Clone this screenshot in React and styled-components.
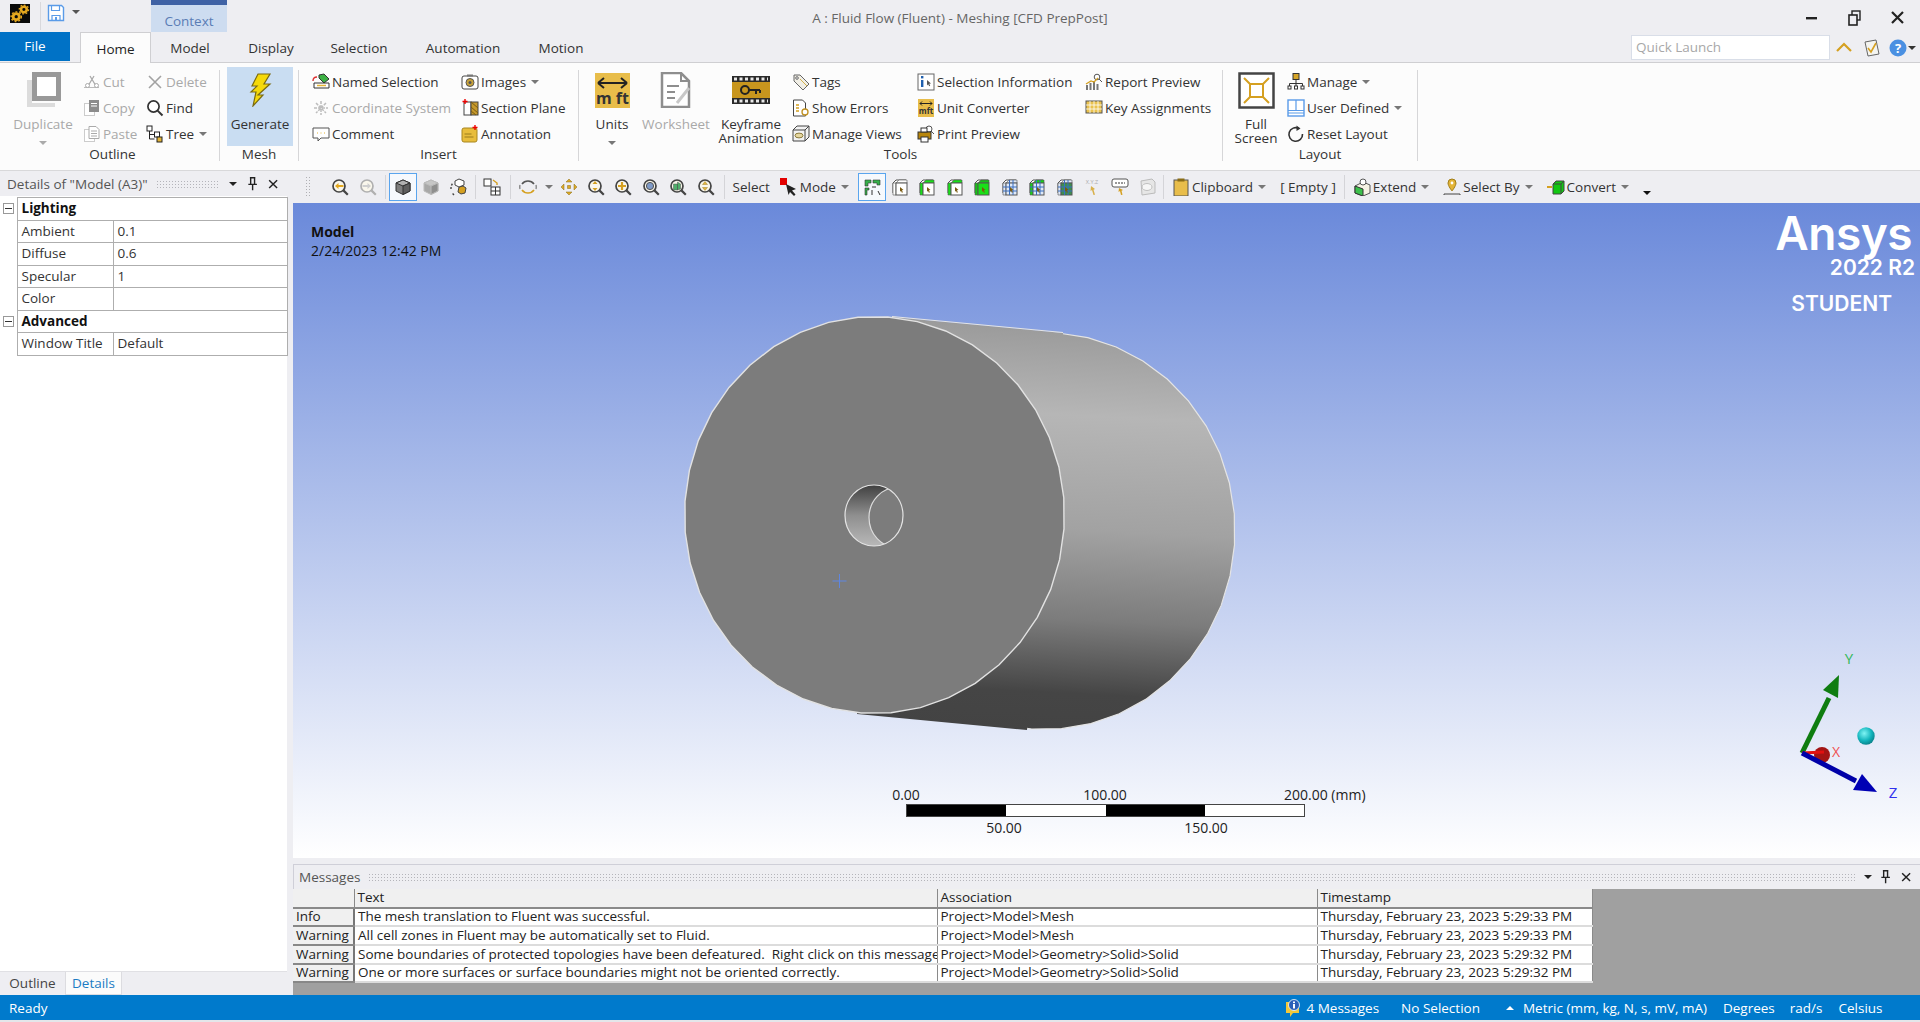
import React from "react";
import styled, { createGlobalStyle } from "styled-components";

const GlobalStyle = createGlobalStyle`
    html, body {
        margin: 0;
        height: 100%;
        overflow: hidden;
        background: #eeeef2;
    }
    * { box-sizing: border-box; }
    body {
        font-family: "Open Sans", "Noto Sans", "Liberation Sans", sans-serif;
        font-size: 13.5px;
        color: #222;
    }
`;

const Window = styled.div`
    width: 1920px;
    height: 1022px;
    display: flex;
    flex-direction: column;
    background: #eeeef2;
`;

/* title bar */
const TitleBar = styled.div`
    height: 32px;
    display: flex;
    flex: none;
`;
const TitleLeft = styled.div`
    width: 240px;
    display: flex;
    align-items: flex-start;
    padding: 4px 0 0 10px;
`;
const TitleDivider = styled.div`
    width: 1px;
    height: 28px;
    background: #d8d8dc;
    margin: -2px 6px 0 10px;
`;
const ContextTab = styled.div`
    width: 76px;
    height: 32px;
    margin: -4px 0 0 71px;
    background: #cddcf0;
    border-top: 5px solid #3f62a5;
    color: #5a7db5;
    text-align: center;
    line-height: 33px;
`;
const TitleText = styled.div`
    flex: 1;
    text-align: center;
    color: #666;
    line-height: 36px;
`;
const WinControls = styled.div`
    width: 240px;
    display: flex;
    justify-content: flex-end;
    align-items: center;
    gap: 25px;
    padding: 4px 13px 0 0;
`;

/* tabs */
const TabRow = styled.div`
    height: 30px;
    display: flex;
    flex: none;
    align-items: flex-start;
    position: relative;
    z-index: 1;
`;
const FileTab = styled.div`
    width: 70px;
    height: 29px;
    margin-right: 10px;
    background: #0072c6;
    color: #fff;
    text-align: center;
    line-height: 29px;
`;
const Tab = styled.div`
    width: ${(p) => p.$w}px;
    height: 31px;
    text-align: center;
    line-height: 33px;
    color: #333;
    ${(p) =>
        p.$active &&
        `
        background: #fcfcfc;
        border: 1px solid #cfcfd2;
        border-bottom: none;
        color: #222;
    `}
`;
const QuickArea = styled.div`
    margin-left: auto;
    display: flex;
    align-items: center;
    height: 29px;
    padding-top: 2px;
`;
const QuickLaunch = styled.div`
    width: 199px;
    height: 25px;
    background: #fff;
    border: 1px solid #d9dee8;
    color: #a8a8a8;
    padding-left: 4px;
    line-height: 23px;
    margin-right: 5px;
`;

/* ribbon */
const Ribbon = styled.div`
    height: 109px;
    flex: none;
    display: flex;
    align-items: flex-start;
    background: #fcfcfc;
    border-top: 1px solid #cfcfd2;
    border-bottom: 1px solid #d8d8da;
    padding-top: 4px;
`;
const Group = styled.div`
    width: ${(p) => p.$w}px;
    flex: none;
`;
const GroupBody = styled.div`
    height: 80px;
    display: flex;
    padding-left: ${(p) => p.$pl || 0}px;
`;
const GroupLabel = styled.div`
    height: 15px;
    line-height: 14px;
    text-align: center;
    color: #333;
    padding-left: ${(p) => p.$pl || 0}px;
`;
const GroupSep = styled.div`
    width: 1px;
    height: 91px;
    margin-top: 3px;
    flex: none;
    background: #d6d6d8;
`;
const LargeBtn = styled.div`
    width: ${(p) => p.$w}px;
    margin: 0 ${(p) => p.$mr || 0}px 0 ${(p) => p.$ml || 0}px;
    height: 79px;
    flex: none;
    display: flex;
    flex-direction: column;
    align-items: center;
    padding-top: 5px;
    line-height: 14px;
    text-align: center;
    color: ${(p) => (p.$off ? "#a9a9a9" : "#333")};
    background: ${(p) => (p.$on ? "#c9ddf2" : "transparent")};
`;
const LargeIcon = styled.div`
    height: 36px;
    display: flex;
    align-items: center;
    margin-bottom: 9px;
`;
const SmallCol = styled.div`
    width: ${(p) => p.$w}px;
    flex: none;
    padding-top: 2px;
`;
const SmallRow = styled.div`
    height: 26px;
    display: flex;
    align-items: center;
    gap: 2px;
    white-space: nowrap;
    color: ${(p) => (p.$off ? "#a9a9a9" : "#333")};
`;
const Caret = styled.span`
    display: inline-block;
    width: 0;
    height: 0;
    margin: ${(p) => p.$m || "0 0 0 3px"};
    border-left: 4px solid transparent;
    border-right: 4px solid transparent;
    border-top: 4px solid ${(p) => p.$c || "#777"};
`;

/* main area */
const Main = styled.div`
    flex: 1;
    min-height: 0;
    display: flex;
`;
const LeftPanel = styled.div`
    width: 287px;
    margin: 1px 6px 0 0;
    display: flex;
    flex-direction: column;
    background: #fff;
`;
const PaneHeader = styled.div`
    height: ${(p) => p.$h}px;
    flex: none;
    display: flex;
    align-items: center;
    gap: 8px;
    padding: 0 8px 0 ${(p) => p.$pl}px;
    background: #eeeef2;
    color: #555;
    white-space: nowrap;
    ${(p) => p.$framed && "border-top: 1px solid #cfcfd8; border-left: 1px solid #cfcfd8;"}
`;
const Grip = styled.div`
    flex: 1;
    height: 8px;
    background-image: radial-gradient(#b4b4ba 0.7px, transparent 0.8px);
    background-size: 3px 3px;
`;
const PaneBtn = styled.span`
    display: flex;
    align-items: center;
    justify-content: center;
    width: 12px;
`;
const DetailsTable = styled.table`
    width: 287px;
    margin-top: 1px;
    table-layout: fixed;
    border-collapse: collapse;
    font-size: 13.5px;
    td {
        height: 22.5px;
        padding: 0 4px;
        line-height: 1;
        color: #333;
        border: 1px solid #aeaeae;
        white-space: nowrap;
        overflow: hidden;
    }
    td.gutter {
        border: none;
        padding: 0 0 0 3px;
    }
    td.group {
        font-weight: 700;
        color: #111;
    }
`;
const MinusBox = styled.div`
    width: 11px;
    height: 11px;
    border: 1px solid #999;
    display: flex;
    align-items: center;
    justify-content: center;
    &::before {
        content: "";
        width: 7px;
        height: 1px;
        background: #333;
    }
`;
const PanelFill = styled.div`
    flex: 1;
`;
const BottomTabs = styled.div`
    height: 24px;
    flex: none;
    display: flex;
    background: #eeeef2;
    border-top: 1px solid #e0e0e4;
`;
const BottomTab = styled.div`
    width: ${(p) => p.$w}px;
    text-align: center;
    line-height: 22px;
    color: ${(p) => (p.$active ? "#1c7cc4" : "#444")};
    background: ${(p) => (p.$active ? "#fbfbfb" : "transparent")};
    ${(p) => p.$active && "border: 1px solid #dcdce0; border-top: none;"}
`;
const RightPane = styled.div`
    flex: 1;
    min-width: 0;
    display: flex;
    flex-direction: column;
`;

/* graphics toolbar */
const Toolbar = styled.div`
    height: 32px;
    flex: none;
    display: flex;
    align-items: center;
    padding-left: 12px;
    color: #333;
    white-space: nowrap;
`;
const ToolGrip = styled.div`
    width: 6px;
    height: 22px;
    margin-right: 15px;
    background-image: radial-gradient(#b0b0b4 0.7px, transparent 0.8px);
    background-size: 3px 3px;
`;
const ToolBtn = styled.div`
    width: ${(p) => p.$w || 28}px;
    height: 28px;
    flex: none;
    display: flex;
    align-items: center;
    justify-content: center;
    ${(p) => p.$on && "border: 1px solid #5aa5ee; background: #f6f9fd;"}
`;
const ToolSep = styled.div`
    width: 1px;
    height: 24px;
    flex: none;
    background: #d4d4d8;
    margin: 0 ${(p) => p.$r ?? 3}px 0 ${(p) => p.$l ?? 3}px;
`;
const ToolText = styled.div`
    display: flex;
    align-items: center;
    gap: 2px;
    margin: 0 ${(p) => p.$r || 0}px 0 ${(p) => p.$l || 0}px;
`;

/* viewport */
const Viewport = styled.div`
    height: 655px;
    flex: none;
    position: relative;
    overflow: hidden;
    background: linear-gradient(#6a89da, #ffffff);
`;
const SceneSvg = styled.svg`
    position: absolute;
    left: 0;
    top: 0;
`;
const ModelInfo = styled.div`
    position: absolute;
    left: 18px;
    top: 19px;
    color: #111;
    font-size: 14px;
    line-height: 19px;
    b {
        display: block;
    }
`;
const Brand = styled.div`
    position: absolute;
    right: 0;
    top: 0;
    width: 180px;
    color: #fff;
    font-family: Inter, "Open Sans", sans-serif;
    font-weight: 600;
    text-align: right;
    white-space: nowrap;
`;
const BrandName = styled.div`
    font-size: 46px;
    line-height: 46px;
    margin: 7px 8px 0 0;
    letter-spacing: -0.5px;
`;
const BrandYear = styled.div`
    font-size: 21px;
    line-height: 24px;
    margin: 0 5px 0 0;
`;
const BrandEdition = styled.div`
    font-size: 21px;
    line-height: 24px;
    margin: 12px 28px 0 0;
`;
const ScaleBar = styled.div`
    position: absolute;
    left: 613px;
    top: 583px;
    width: 399px;
    height: 60px;
    font-size: 14px;
    color: #222;
`;
const ScaleTrack = styled.div`
    position: absolute;
    left: 0;
    right: 0;
    top: 18px;
    height: 13px;
    display: flex;
    border: 1px solid #444;
`;
const ScaleSeg = styled.div`
    flex: 1;
    background: ${(p) => (p.$dark ? "#000" : "#fff")};
`;
const ScaleLabel = styled.span`
    position: absolute;
    top: ${(p) => (p.$low ? 33 : 0)}px;
    left: ${(p) => p.$x}px;
    line-height: 18px;
    transform: translateX(${(p) => (p.$start ? "0" : "-50%")});
    white-space: nowrap;
`;

/* messages */
const Messages = styled.div`
    flex: 1;
    min-height: 0;
    margin-top: 6px;
    display: flex;
    flex-direction: column;
    background: #a0a0a0;
`;
const MessageTable = styled.table`
    width: 1299px;
    table-layout: fixed;
    border-collapse: collapse;
    font-size: 13.5px;
    th, td {
        height: 18.7px;
        padding: 0 3px;
        line-height: 1;
        text-align: left;
        font-weight: 400;
        color: #222;
        white-space: pre;
        overflow: hidden;
        background: #fff;
        border-right: 1px solid #8a8a8a;
        border-bottom: 2px solid #dcdcdc;
    }
    th, td.kind {
        background: #f0f0f0;
    }
    th {
        border-bottom: 2px solid #8a8a8a;
    }
    td.kind {
        border-right: 2px solid #777;
        border-bottom-color: #888;
    }
`;

/* status bar */
const StatusBar = styled.div`
    height: 25px;
    flex: none;
    display: flex;
    align-items: center;
    padding: 0 10px 0 9px;
    background: #007acc;
    color: #fff;
`;
const StatusItem = styled.div`
    display: flex;
    align-items: center;
    gap: 3px;
    margin-left: ${(p) => p.$ml}px;
    white-space: nowrap;
`;
const BottomStrip = styled.div`
    height: 2px;
    flex: none;
    background: #e4e6ea;
`;

/* --- icons --- */
const mag = (inner, c = "#444") => (
    <>
        <circle cx="8" cy="8" r="6" fill="#faf7ec" stroke={c} strokeWidth="1.7" />
        <path d="M12.4 12.4L16.8 16.8" stroke={c} strokeWidth="2.2" />
        {inner}
    </>
);
const cube = (top, left, right, stroke = "#444") => (
    <>
        <path d="M9 2l7 3v8l-7 3.5L2 13V5z" fill={left} stroke={stroke} />
        <path d="M9 2l7 3-7 3-7-3z" fill={top} stroke={stroke} />
        <path d="M9 8l7-3v8l-7 3.5z" fill={right} stroke={stroke} />
    </>
);
const pick = (top, front, mesh) => (
    <>
        <path d="M2 5l3-3h10v13H5l-3-0z" fill="#fff" stroke="#555" />
        <path d="M2 5h3v12H2zM5 5l3-3h8v3z" fill={top} stroke="#555" strokeWidth=".6" />
        <rect x="5" y="5" width="11" height="12" fill={front} stroke="#555" />
        {mesh && <path d="M8.5 2v15M12 2v15M2 9h14M2 13h14" stroke="#3a6fc0" strokeWidth="1" />}
        <path d="M9 9l3.5 3-1.6.3 1 2-1 .4-.9-2-1 1z" fill="#7a5a10" />
    </>
);

const ICONS = {
    gears: (
        <>
            <rect width="18" height="18" fill="#0a0a0a" />
            <circle cx="12.5" cy="5.2" r="2.6" fill="none" stroke="#e5a81f" strokeWidth="2.4" />
            <circle cx="5.6" cy="12" r="2.8" fill="none" stroke="#e5a81f" strokeWidth="2.6" />
            <circle cx="12.5" cy="5.2" r="4.2" fill="none" stroke="#e5a81f" strokeWidth="1.2" strokeDasharray="1.6 1.6" />
            <circle cx="5.6" cy="12" r="4.6" fill="none" stroke="#e5a81f" strokeWidth="1.3" strokeDasharray="1.7 1.7" />
        </>
    ),
    save: (
        <>
            <path d="M1.5 1.5h13l2 2v13h-15z" fill="#fff" stroke="#5a9be8" strokeWidth="1.4" />
            <path d="M4.5 1.5v5h8v-5M5 16.5v-5h8v5" fill="none" stroke="#5a9be8" strokeWidth="1.2" />
            <rect x="8" y="13" width="2" height="3" fill="#5a9be8" />
        </>
    ),
    cut: (
        <>
            <path d="M1 14.5h15" stroke="#bbb" />
            <path d="M5 13L11 3M13 13L7 3" stroke="#aaa" strokeWidth="1.3" />
            <circle cx="4.5" cy="12.5" r="2" fill="#fff" stroke="#aaa" />
            <circle cx="13.5" cy="12.5" r="2" fill="#fff" stroke="#aaa" />
        </>
    ),
    copy: (
        <>
            <rect x="1.5" y="4.5" width="10" height="12" fill="#fff" stroke="#ccc" />
            <rect x="6" y="1" width="10" height="12" fill="#8c8c8c" />
            <path d="M8 4.5h6M8 7h6" stroke="#fff" />
        </>
    ),
    paste: (
        <>
            <rect x="1.5" y="4.5" width="10" height="12" fill="#fff" stroke="#ccc" />
            <path d="M6 1.5h7l3 3v9H6z" fill="#fff" stroke="#aaa" />
            <path d="M8 6h6M8 8.5h6M8 11h6" stroke="#aaa" />
        </>
    ),
    del: <path d="M3 3l12 12M15 3L3 15" stroke="#a2a2a2" strokeWidth="1.6" />,
    find: (
        <>
            <circle cx="7.5" cy="7.5" r="5.6" fill="#fff" stroke="#333" strokeWidth="1.7" />
            <path d="M11.6 11.6L16.5 16.5" stroke="#333" strokeWidth="2" />
        </>
    ),
    tree: (
        <>
            <rect x="1" y="1" width="5" height="5" fill="#fff" stroke="#222" />
            <path d="M3.5 6v8h5M3.5 9.5h5" fill="none" stroke="#222" />
            <rect x="8.5" y="7" width="5" height="5" fill="#fff" stroke="#222" />
            <rect x="11" y="12" width="5" height="5" fill="#e3b437" stroke="#222" />
        </>
    ),
    named: (
        <>
            <path d="M2 10h15v5H2z" fill="#fff" stroke="#333" />
            <path d="M7 2l5-1 5 5-5 4-5-5z" fill="#3cb043" stroke="#333" />
            <path d="M1 8c0-3 2-4 4-4" fill="none" stroke="#d33" strokeWidth="1.4" />
            <path d="M5 12.5h9" stroke="#e3b437" strokeWidth="1.5" />
        </>
    ),
    coord: <path d="M9 2v14M2 9h14M4 4l10 10M14 4L4 14" stroke="#bdbdbd" strokeWidth="1.5" strokeDasharray="3 1" />,
    comment: (
        <>
            <path d="M1 3h16v10H9l-3 3v-3H1z" fill="#fff" stroke="#555" />
            <path d="M5 8h1M8.5 8h1M12 8h1" stroke="#e3b437" />
        </>
    ),
    images: (
        <>
            <rect x="1" y="3" width="16" height="13" rx="2" fill="#fff" stroke="#444" />
            <rect x="6" y="1.5" width="6" height="2" fill="#777" />
            <circle cx="9" cy="9.5" r="4" fill="#c9a33a" stroke="#555" />
            <circle cx="9" cy="9.5" r="1.5" fill="#555" />
        </>
    ),
    section: (
        <>
            <rect x="3" y="3" width="7" height="13" fill="#fff" stroke="#444" />
            <rect x="10" y="3" width="7" height="13" fill="#c79a2c" stroke="#444" />
            <path d="M10 3l7 6M10 8l7 6M10 12l5 4" stroke="#7a5c12" />
            <path d="M4 0v5M1.5 2.5h5" stroke="#e00" strokeWidth="1.4" />
        </>
    ),
    annot: (
        <>
            <rect x="1" y="3" width="15" height="14" rx="2" fill="#e8bd3c" stroke="#a8861f" />
            <path d="M3.5 12h9M3.5 9h7" stroke="#9a7c1c" />
            <path d="M14 0v5M11.5 2.5h5" stroke="#e00" strokeWidth="1.4" />
        </>
    ),
    tags: (
        <>
            <path d="M2 2h6l9 9-6 6-9-9z" fill="#f1efe6" stroke="#666" />
            <circle cx="5" cy="5" r="1.3" fill="#fff" stroke="#666" />
            <path d="M8 6l7 7" stroke="#d4b04a" />
        </>
    ),
    errors: (
        <>
            <path d="M1.5 1h9l3 3v13h-12z" fill="#fff" stroke="#444" />
            <path d="M4 6h3M4 9h3M4 12h3" stroke="#d4a020" strokeWidth="1.4" />
            <circle cx="13" cy="13" r="3" fill="#fff" stroke="#c09020" strokeWidth="1.3" />
        </>
    ),
    views: (
        <>
            <path d="M1 5l4-4h12v11l-4 4H1z" fill="#f2f2f2" stroke="#444" />
            <path d="M1 5h12v11M13 5l4-4" fill="none" stroke="#444" />
            <ellipse cx="7" cy="10.5" rx="4" ry="2.4" fill="#e6d7a0" stroke="#8a7a3c" />
        </>
    ),
    selinfo: (
        <>
            <rect x="1" y="1" width="16" height="16" fill="#fff" stroke="#666" />
            <rect x="4" y="3" width="2.4" height="2.4" fill="#1e5fae" />
            <rect x="4" y="7" width="2.4" height="7" fill="#1e5fae" />
            <path d="M10 7l4 3.5-1.8.3 1 2-1 .5-1-2-1.2 1.2z" fill="#555" />
        </>
    ),
    unitconv: (
        <>
            <rect x="1" y="0" width="16" height="18" fill="#e8bd4a" />
            <path d="M3 4.5h12M3 4.5l2-2M3 4.5l2 2M15 4.5l-2-2M15 4.5l-2 2" stroke="#222" fill="none" />
            <text x="9" y="15" textAnchor="middle" fontSize="8" fontWeight="700" fontFamily="Open Sans" fill="#333">mft</text>
        </>
    ),
    print: (
        <>
            <circle cx="12" cy="4" r="3" fill="#fff" stroke="#555" />
            <path d="M14 6l3 3" stroke="#555" />
            <rect x="1" y="7" width="13" height="7" fill="#b8860b" stroke="#333" />
            <rect x="4" y="3" width="6" height="4" fill="#fff" stroke="#333" />
            <rect x="4" y="12" width="7" height="5" fill="#fff" stroke="#333" />
        </>
    ),
    report: (
        <>
            <circle cx="12" cy="4" r="2.8" fill="#fff" stroke="#555" />
            <path d="M14 6l3 3" stroke="#555" />
            <path d="M2 17v-5M5.5 17v-7M9 17v-9M12.5 17v-6" stroke="#777" strokeWidth="2" />
            <path d="M1 11l5-3 3 1 4-4" fill="none" stroke="#d4a020" strokeWidth="1.3" />
        </>
    ),
    keys: (
        <>
            <rect x="1" y="2" width="16" height="12" fill="#eac24e" stroke="#555" />
            <path d="M1 6h16M1 10h16M5 2v12M9 2v12M13 2v12" stroke="#fff" strokeWidth=".8" />
        </>
    ),
    manage: (
        <>
            <rect x="6" y="0.5" width="6" height="6" fill="#d6a528" stroke="#333" />
            <path d="M9 6.5v4M2.5 13v-2.5h13V13M9 10.5V13" fill="none" stroke="#333" />
            <rect x="1" y="13" width="3" height="3" fill="#fff" stroke="#333" />
            <rect x="7.5" y="13" width="3" height="3" fill="#fff" stroke="#333" />
            <rect x="14" y="13" width="3" height="3" fill="#fff" stroke="#333" />
        </>
    ),
    userdef: (
        <>
            <rect x="1" y="1" width="16" height="16" fill="#fff" stroke="#5a9be8" strokeWidth="1.4" />
            <path d="M1 11.5h16M1 14h16M9 1v10.5" stroke="#5a9be8" strokeWidth="1.2" />
        </>
    ),
    reset: (
        <>
            <path d="M12 3.5A6.8 6.8 0 1 0 15.5 9" fill="none" stroke="#333" strokeWidth="1.6" />
            <path d="M9.5 0.5l4 3-4 2.5z" fill="#333" />
        </>
    ),
    minimize: <rect x="3" y="8" width="11" height="2.4" fill="#222" />,
    restore: (
        <>
            <rect x="6" y="2" width="8" height="9" fill="none" stroke="#222" strokeWidth="1.4" />
            <rect x="3" y="6" width="8" height="10" fill="#eeeef2" stroke="#222" strokeWidth="1.6" />
        </>
    ),
    close: <path d="M3 3l11 11M14 3L3 14" stroke="#222" strokeWidth="2.2" />,
    chevron: <path d="M2 12l7-7 7 7" fill="none" stroke="#d5a021" strokeWidth="2.2" />,
    feedback: (
        <>
            <path d="M3 3l11-2 3 14-11 2z" fill="#f4f4f0" stroke="#666" />
            <path d="M6 9l3 4 5-9" fill="none" stroke="#d5a021" strokeWidth="1.6" />
        </>
    ),
    help: (
        <>
            <circle cx="9" cy="9" r="8.5" fill="#4a90e2" />
            <text x="9" y="14" textAnchor="middle" fontSize="13" fontWeight="700" fontFamily="Open Sans" fill="#fff">?</text>
        </>
    ),
    zoomPrev: mag(<path d="M4 8l3.5-3v2h5v2h-5v2z" fill="#e3a81f" />),
    zoomNext: mag(<path d="M12 8L8.500 5v2h-5v2h5v2z" fill="#cfcfcf" />, "#b0b0b0"),
    iso: cube("#b0b0b0", "#7e7e7e", "#5e5e5e", "#333"),
    isoOff: cube("#c6c6c6", "#a8a8a8", "#8e8e8e", "#bbb"),
    rotCube: (
        <>
            <path d="M9 9l4-1 3 2-1 5-4 1-3-2z" fill="#d5a021" stroke="#444" />
            <path d="M9 1l5 2v4l-5 2-4-2V3z" fill="#fff" stroke="#444" />
            <path d="M1 11a8 8 0 0 1 2-6M4 17l-2-2" fill="none" stroke="#444" strokeWidth="1.4" strokeDasharray="2 1.5" />
        </>
    ),
    layoutBoxes: (
        <>
            <rect x="1" y="1" width="7" height="7" fill="#fff" stroke="#333" />
            <rect x="8" y="9" width="9" height="8" fill="#fff" stroke="#333" />
            <path d="M12.500 9v8M8 13h9" stroke="#333" />
            <path d="M10 2l4 3v2" fill="none" stroke="#d5a021" strokeWidth="1.4" />
        </>
    ),
    rotate: (
        <>
            <path d="M3 6a7.500 7.500 0 0 1 12 0" fill="none" stroke="#555" strokeWidth="1.6" />
            <path d="M15 12a7.500 7.500 0 0 1-12 0" fill="none" stroke="#d5a021" strokeWidth="1.6" />
            <path d="M1 11a8 8 0 0 1 0-4M17 7a8 8 0 0 1 0 4" fill="none" stroke="#888" strokeWidth="1.4" />
        </>
    ),
    pan: <path d="M9 1l3 3H6zM9 17l-3-3h6zM1 9l3-3v6zM17 9l-3 3V6zM7.500 7.500h3v3h-3z" fill="#dca927" stroke="#8a6d15" strokeWidth=".5" />,
    zoomFit: mag(<path d="M8 3l2.500 3h-5zM8 13l-2.500-3h5z" fill="#d5a021" />),
    zoomIn: mag(<path d="M8 4v8M4 8h8" stroke="#d5a021" strokeWidth="2.200" />),
    zoomAll: mag(<circle cx="8" cy="8" r="3.600" fill="#7f9ac7" stroke="#555" />),
    zoomSel: mag(<path d="M4.500 6h4v6h-4zM8.500 4l3 2v5l-3 1z" fill="#4faf6a" stroke="#555" strokeWidth=".5" />),
    zoomBox: mag(<path d="M8 3.500l2.500 3h-5zM8 12.500l-2.500-3h5z" fill="#e4b63c" stroke="#8a6d15" strokeWidth=".4" />),
    mode: (
        <>
            <rect x="0" y="0" width="7" height="7" fill="#e30000" />
            <path d="M6 6l10 5-4 1.500 3.500 4-1.500 1.500-4-4-1.500 3z" fill="#222" />
        </>
    ),
    smartSel: (
        <>
            <path d="M2 2h6v3H5v3H2zM10 2h7v5h-3V5h-4z" fill="#35b04a" stroke="#333" strokeWidth=".6" />
            <path d="M2 10h4v2H4v5H2z" fill="#35b04a" stroke="#333" strokeWidth=".6" />
            <path d="M9 9h4M9 12v5M15 13l2 4" stroke="#333" />
        </>
    ),
    selVertex: pick("#fff", "#fff"),
    selEdge: pick("#19e019", "#fff"),
    selFace: pick("#19e019", "#fff"),
    selBody: pick("#19c019", "#19e019"),
    meshNode: pick("#dfe9f8", "#dfe9f8", true),
    meshEdge: pick("#19d019", "#dfe9f8", true),
    meshFace: pick("#dfe9f8", "#3c8f50", true),
    xyz: (
        <>
            <text x="9" y="6" textAnchor="middle" fontSize="5.500" fontFamily="Open Sans" fill="#aaa">X.Y.Z</text>
            <path d="M8 8l4 3-1.500.7 1.500 5-1.500.3-1.500-5-1.500 1z" fill="#d8b04a" />
        </>
    ),
    selId: (
        <>
            <rect x="1" y="1" width="16" height="8" rx="2" fill="#fff" stroke="#555" />
            <path d="M4 5h10" stroke="#777" strokeWidth="1.600" strokeDasharray="2 1" />
            <path d="M8 10l4 2-1.500.7 1 4-1.500.3-1-4-1.500 1z" fill="#d5a021" />
        </>
    ),
    nameSel: (
        <>
            <path d="M3 3l11-2 3 3v11l-13 2z" fill="#e6e6e6" stroke="#bbb" />
            <ellipse cx="9" cy="9" rx="5" ry="3.500" fill="#f6f6f6" stroke="#c0c0c0" />
        </>
    ),
    clipboard: (
        <>
            <rect x="2" y="2" width="14" height="16" fill="#e8bd4a" stroke="#555" />
            <rect x="5.500" y="0.500" width="7" height="3" fill="#8a6d15" />
        </>
    ),
    extend: (
        <>
            <path d="M2 8l8-4 7 3v8l-7 3-8-3z" fill="#f6f2e4" stroke="#555" />
            <path d="M2 8l8 3v7l-8-3z" fill="#3cc04c" stroke="#333" />
            <circle cx="10" cy="4" r="3" fill="#fff" stroke="#555" />
        </>
    ),
    selectBy: (
        <>
            <path d="M9 1a4 4 0 0 1 4 4c0 3-4 8-4 8s-4-5-4-8a4 4 0 0 1 4-4z" fill="#e3b437" stroke="#a07d18" />
            <circle cx="9" cy="5" r="1.400" fill="#fff" />
            <path d="M1 17v-1h16v1" fill="none" stroke="#444" />
        </>
    ),
    convert: (
        <>
            <path d="M0 9h5" stroke="#d5a021" strokeWidth="2" />
            <path d="M6 6l3-3h8v10l-3 3H6z" fill="#11c711" stroke="#444" />
            <path d="M6 6h8v10M14 6l3-3" fill="none" stroke="#444" />
        </>
    ),
    info: (
        <>
            <path d="M1 3h13v11H8l-3 4v-4H1z" fill="#f1c83a" />
            <circle cx="9" cy="6" r="5.500" fill="#2b5fb8" stroke="#fff" strokeWidth=".8" />
            <rect x="8" y="5" width="2" height="4.500" fill="#fff" />
            <rect x="8" y="2.500" width="2" height="1.600" fill="#fff" />
        </>
    ),
    pin: (
        <>
            <path d="M5 1h7M6 1v8M11 1v8M3 9.500h11M8.500 10v7" fill="none" stroke="#222" strokeWidth="1.800" />
        </>
    ),
    paneClose: <path d="M3 3l11 11M14 3L3 14" stroke="#222" strokeWidth="2" />,
};

const Icon = ({ name, size = 18, h }) => (
    <svg width={size} height={h || size} viewBox="0 0 18 18" preserveAspectRatio="none" style={{ flex: "none", display: "block" }}>
        {ICONS[name]}
    </svg>
);

const UnitsIcon = () => (
    <svg width="35" height="35" viewBox="0 0 35 35">
        <rect width="35" height="35" fill="#e8bd4a" />
        <path d="M3 10h29M3 10l6-5M3 10l6 5M32 10l-6-5M32 10l-6 5" fill="none" stroke="#222" strokeWidth="2" />
        <text x="17.500" y="31" textAnchor="middle" fontSize="16" fontWeight="700" fontFamily="Open Sans" fill="#333">m ft</text>
    </svg>
);
const DuplicateIcon = () => (
    <svg width="36" height="36" viewBox="0 0 36 36">
        <path d="M2 8h5v23h23v4H2z" fill="#dcdcdc" />
        <rect x="9.500" y="2.500" width="24" height="24" fill="#fff" stroke="#999" strokeWidth="5" />
    </svg>
);
const LightningIcon = () => (
    <svg width="23" height="34" viewBox="0 0 23 34">
        <path d="M9 1h12l-6 10h6L9 22h5L4 33l3-14H2l6-6H3z" fill="#f5d90a" stroke="#7a6a10" strokeWidth="1.200" />
    </svg>
);
const WorksheetIcon = () => (
    <svg width="33" height="36" viewBox="0 0 33 36">
        <path d="M2 1h19l8 8v26H2z" fill="#fff" stroke="#8e8e8e" strokeWidth="2.500" />
        <path d="M21 1v8h8" fill="none" stroke="#8e8e8e" strokeWidth="2" />
        <path d="M7 14h12M7 20h8M7 26h8" stroke="#8e8e8e" strokeWidth="2.200" />
        <path d="M17 31l12-15" stroke="#c8c8c8" strokeWidth="3" />
    </svg>
);
const KeyframeIcon = () => (
    <svg width="38" height="28" viewBox="0 0 38 28">
        <rect width="38" height="28" fill="#2b2b2b" />
        <rect y="6" width="38" height="16" fill="#c8961e" />
        <path d="M2 3h34M2 25h34" stroke="#e8e8e8" strokeWidth="3" strokeDasharray="3 2.500" />
        <circle cx="13" cy="14" r="4" fill="none" stroke="#222" strokeWidth="2" />
        <path d="M17 14h11M24 14v4M28 14v3" stroke="#222" strokeWidth="2" />
    </svg>
);
const FullScreenIcon = () => (
    <svg width="37" height="37" viewBox="0 0 37 37">
        <rect x="1.500" y="1.500" width="34" height="34" fill="#fff" stroke="#444" strokeWidth="2.500" />
        <rect x="12" y="12" width="13" height="13" fill="none" stroke="#d5a021" strokeWidth="2" />
        <path d="M12 12L6 6M25 12l6-6M12 25l-6 6M25 25l6 6" stroke="#d5a021" strokeWidth="2" />
    </svg>
);

const Small = ({ icon, children, off, caret, iconWidth }) => (
    <SmallRow $off={off}>
        <Icon name={icon} size={iconWidth || 18} h={18} />
        {children}
        {caret && <Caret />}
    </SmallRow>
);

// tessellated outline of the cylinder caps, same look as the meshed view
const ring = (cx, cy, rx, ry, n = 40) =>
    Array.from({ length: n }, (_, i) => {
        const a = (i / n) * Math.PI * 2 + 0.07;
        return `${(cx + rx * Math.cos(a)).toFixed(1)},${(cy + ry * Math.sin(a)).toFixed(1)}`;
    }).join(" ");

const Scene = () => (
    <SceneSvg width="1627" height="655" viewBox="293 203 1627 655">
        <defs>
            <linearGradient id="wall" gradientUnits="userSpaceOnUse" x1="1005" y1="322" x2="985" y2="730">
                <stop offset="0" stopColor="#9a9a9a" />
                <stop offset="0.22" stopColor="#b6b6b6" />
                <stop offset="0.5" stopColor="#a2a2a2" />
                <stop offset="0.72" stopColor="#7c7c7c" />
                <stop offset="0.9" stopColor="#454545" />
                <stop offset="1" stopColor="#434343" />
            </linearGradient>
            <linearGradient id="bore" x1="0" y1="0" x2="0" y2="1">
                <stop offset="0" stopColor="#404040" />
                <stop offset="0.5" stopColor="#8f8f8f" />
                <stop offset="1" stopColor="#b8b8b8" />
            </linearGradient>
            <clipPath id="boreClip">
                <ellipse cx="874" cy="515.500" rx="29" ry="30.500" />
            </clipPath>
            <radialGradient id="cyanBall" cx="0.4" cy="0.35" r="0.7">
                <stop offset="0" stopColor="#7ff4f4" />
                <stop offset="0.6" stopColor="#12b4bc" />
                <stop offset="1" stopColor="#087c84" />
            </radialGradient>
        </defs>

        <polygon points={ring(1045, 531, 190, 198.5)} fill="url(#wall)" stroke="#e4e4e4" strokeWidth="1.200" />
        <polygon points="892,317 1063,333 1027,730 857,714" fill="url(#wall)" />
        <path d="M892 316.500L1063 332.500" stroke="#e4e4e4" strokeWidth="1" />
        <polygon points={ring(874.5, 515, 190, 198.5)} fill="#7c7c7c" stroke="#e2e2e2" strokeWidth="1.400" />

        <ellipse cx="874" cy="515.500" rx="29" ry="30.500" fill="url(#bore)" />
        <g clipPath="url(#boreClip)">
            <ellipse cx="897" cy="517.500" rx="28" ry="30" fill="#7c7c7c" stroke="#dcdcdc" strokeWidth="1.200" />
        </g>
        <ellipse cx="874" cy="515.500" rx="29" ry="30.500" fill="none" stroke="#e4e4e4" strokeWidth="1.200" />

        <path d="M839.500 574v14M832.500 581h14" stroke="#5f86e0" strokeWidth="1" />

        {/* triad */}
        <path d="M1802 753L1829 698" stroke="#0f7d10" strokeWidth="5" />
        <path d="M1839 675L1838 698L1823 690z" fill="#0f7d10" />
        <circle cx="1822" cy="755" r="8" fill="#a31414" />
        <path d="M1802 753L1824 752" stroke="#e21010" strokeWidth="3" />
        <path d="M1802 753L1856 781" stroke="#0000a8" strokeWidth="5" />
        <path d="M1877 792L1853 790L1862 774z" fill="#0000b4" />
        <circle cx="1866" cy="736" r="8.700" fill="url(#cyanBall)" />
        <text x="1849" y="664" textAnchor="middle" fontSize="15" fontFamily="Open Sans" fill="#35b85a">Y</text>
        <text x="1836" y="757" textAnchor="middle" fontSize="14" fontFamily="Open Sans" fill="#f05050">X</text>
        <text x="1893" y="798" textAnchor="middle" fontSize="15" fontFamily="Open Sans" fill="#3030ee">Z</text>
    </SceneSvg>
);

const detailRows = [
    { group: "Lighting" },
    { label: "Ambient", value: "0.1" },
    { label: "Diffuse", value: "0.6" },
    { label: "Specular", value: "1" },
    { label: "Color", value: "" },
    { group: "Advanced" },
    { label: "Window Title", value: "Default" },
];

const messageRows = [
    ["Info", "The mesh translation to Fluent was successful.", "Project>Model>Mesh", "Thursday, February 23, 2023 5:29:33 PM"],
    ["Warning", "All cell zones in Fluent may be automatically set to Fluid.", "Project>Model>Mesh", "Thursday, February 23, 2023 5:29:33 PM"],
    ["Warning", "Some boundaries of protected topologies have been defeatured.  Right click on this message for details.", "Project>Model>Geometry>Solid>Solid", "Thursday, February 23, 2023 5:29:32 PM"],
    ["Warning", "One or more surfaces or surface boundaries might not be oriented correctly.", "Project>Model>Geometry>Solid>Solid", "Thursday, February 23, 2023 5:29:32 PM"],
];

const toolIcons = ["selVertex", "selEdge", "selFace", "selBody", "meshNode", "meshEdge", "meshFace", "xyz", "selId", "nameSel"];

export default function App() {
    return (
        <Window>
            <GlobalStyle />
            <TitleBar>
                <TitleLeft>
                    <Icon name="gears" size={20} h={19} />
                    <TitleDivider />
                    <Icon name="save" />
                    <Caret $c="#555" $m="6px 0 0 7px" />
                    <ContextTab>Context</ContextTab>
                </TitleLeft>
                <TitleText>A : Fluid Flow (Fluent) - Meshing [CFD PrepPost]</TitleText>
                <WinControls>
                    <Icon name="minimize" />
                    <Icon name="restore" />
                    <Icon name="close" />
                </WinControls>
            </TitleBar>

            <TabRow>
                <FileTab>File</FileTab>
                <Tab $w={71} $active>Home</Tab>
                <Tab $w={78}>Model</Tab>
                <Tab $w={84}>Display</Tab>
                <Tab $w={92}>Selection</Tab>
                <Tab $w={116}>Automation</Tab>
                <Tab $w={80}>Motion</Tab>
                <QuickArea>
                    <QuickLaunch>Quick Launch</QuickLaunch>
                    <Icon name="chevron" />
                    <span style={{ width: 9 }} />
                    <Icon name="feedback" />
                    <span style={{ width: 9 }} />
                    <Icon name="help" />
                    <Caret $c="#333" $m="0 4px 0 1px" />
                </QuickArea>
            </TabRow>

            <Ribbon>
                <Group $w={219}>
                    <GroupBody>
                        <LargeBtn $w={70} $ml={8} $mr={5} $off>
                            <LargeIcon><DuplicateIcon /></LargeIcon>
                            Duplicate
                            <Caret $c="#aaa" $m="10px 0 0" />
                        </LargeBtn>
                        <SmallCol $w={63}>
                            <Small icon="cut" off>Cut</Small>
                            <Small icon="copy" off>Copy</Small>
                            <Small icon="paste" off>Paste</Small>
                        </SmallCol>
                        <SmallCol $w={73}>
                            <Small icon="del" off>Delete</Small>
                            <Small icon="find">Find</Small>
                            <Small icon="tree" caret>Tree</Small>
                        </SmallCol>
                    </GroupBody>
                    <GroupLabel $pl={6}>Outline</GroupLabel>
                </Group>
                <GroupSep />
                <Group $w={78}>
                    <GroupBody>
                        <LargeBtn $w={66} $ml={7} $on>
                            <LargeIcon><LightningIcon /></LargeIcon>
                            Generate
                        </LargeBtn>
                    </GroupBody>
                    <GroupLabel>Mesh</GroupLabel>
                </Group>
                <GroupSep />
                <Group $w={279}>
                    <GroupBody $pl={13}>
                        <SmallCol $w={149}>
                            <Small icon="named">Named Selection</Small>
                            <Small icon="coord" off>Coordinate System</Small>
                            <Small icon="comment">Comment</Small>
                        </SmallCol>
                        <SmallCol $w={117}>
                            <Small icon="images" caret>Images</Small>
                            <Small icon="section">Section Plane</Small>
                            <Small icon="annot">Annotation</Small>
                        </SmallCol>
                    </GroupBody>
                    <GroupLabel>Insert</GroupLabel>
                </Group>
                <GroupSep />
                <Group $w={643}>
                    <GroupBody>
                        <LargeBtn $w={50} $ml={8}>
                            <LargeIcon><UnitsIcon /></LargeIcon>
                            Units
                            <Caret $c="#777" $m="10px 0 0" />
                        </LargeBtn>
                        <LargeBtn $w={72} $ml={3} $off>
                            <LargeIcon><WorksheetIcon /></LargeIcon>
                            Worksheet
                        </LargeBtn>
                        <LargeBtn $w={78}>
                            <LargeIcon><KeyframeIcon /></LargeIcon>
                            Keyframe
                            <br />
                            Animation
                        </LargeBtn>
                        <SmallCol $w={2} />
                        <SmallCol $w={125}>
                            <Small icon="tags">Tags</Small>
                            <Small icon="errors">Show Errors</Small>
                            <Small icon="views">Manage Views</Small>
                        </SmallCol>
                        <SmallCol $w={168}>
                            <Small icon="selinfo">Selection Information</Small>
                            <Small icon="unitconv">Unit Converter</Small>
                            <Small icon="print">Print Preview</Small>
                        </SmallCol>
                        <SmallCol $w={137}>
                            <Small icon="report">Report Preview</Small>
                            <Small icon="keys">Key Assignments</Small>
                        </SmallCol>
                    </GroupBody>
                    <GroupLabel>Tools</GroupLabel>
                </Group>
                <GroupSep />
                <Group $w={194}>
                    <GroupBody>
                        <LargeBtn $w={62} $ml={2}>
                            <LargeIcon><FullScreenIcon /></LargeIcon>
                            Full
                            <br />
                            Screen
                        </LargeBtn>
                        <SmallCol $w={130}>
                            <Small icon="manage" caret>Manage</Small>
                            <Small icon="userdef" caret>User Defined</Small>
                            <Small icon="reset">Reset Layout</Small>
                        </SmallCol>
                    </GroupBody>
                    <GroupLabel>Layout</GroupLabel>
                </Group>
                <GroupSep />
            </Ribbon>

            <Main>
                <LeftPanel>
                    <PaneHeader $h={24} $pl={7}>
                        Details of "Model (A3)"
                        <Grip />
                        <Caret $c="#222" $m="0 2px" />
                        <PaneBtn><Icon name="pin" size={14} /></PaneBtn>
                        <PaneBtn><Icon name="paneClose" size={13} /></PaneBtn>
                    </PaneHeader>
                    <DetailsTable>
                        <colgroup>
                            <col width="17" />
                            <col width="96" />
                            <col width="174" />
                        </colgroup>
                        <tbody>
                            {detailRows.map((row) =>
                                row.group ? (
                                    <tr key={row.group}>
                                        <td className="gutter"><MinusBox /></td>
                                        <td className="group" colSpan={2}>{row.group}</td>
                                    </tr>
                                ) : (
                                    <tr key={row.label}>
                                        <td className="gutter" />
                                        <td>{row.label}</td>
                                        <td>{row.value}</td>
                                    </tr>
                                )
                            )}
                        </tbody>
                    </DetailsTable>
                    <PanelFill />
                    <BottomTabs>
                        <BottomTab $w={65}>Outline</BottomTab>
                        <BottomTab $w={57} $active>Details</BottomTab>
                    </BottomTabs>
                </LeftPanel>

                <RightPane>
                    <Toolbar>
                        <ToolGrip />
                        <ToolBtn><Icon name="zoomPrev" /></ToolBtn>
                        <ToolBtn><Icon name="zoomNext" /></ToolBtn>
                        <ToolSep />
                        <ToolBtn $on><Icon name="iso" /></ToolBtn>
                        <ToolBtn><Icon name="isoOff" /></ToolBtn>
                        <ToolBtn><Icon name="rotCube" /></ToolBtn>
                        <ToolSep $l={2} $r={2} />
                        <ToolBtn><Icon name="layoutBoxes" /></ToolBtn>
                        <ToolSep $l={4} $r={3} />
                        <ToolBtn><Icon name="rotate" /></ToolBtn>
                        <ToolBtn $w={14}><Caret $c="#777" $m="0" /></ToolBtn>
                        <ToolBtn $w={26}><Icon name="pan" /></ToolBtn>
                        <ToolBtn $w={27.5}><Icon name="zoomFit" /></ToolBtn>
                        <ToolBtn $w={27.5}><Icon name="zoomIn" /></ToolBtn>
                        <ToolBtn $w={27.5}><Icon name="zoomAll" /></ToolBtn>
                        <ToolBtn $w={27.5}><Icon name="zoomSel" /></ToolBtn>
                        <ToolBtn $w={27.5}><Icon name="zoomBox" /></ToolBtn>
                        <ToolSep $l={4} $r={8} />
                        <ToolText $r={10}>Select</ToolText>
                        <ToolText>
                            <Icon name="mode" /> Mode<Caret />
                        </ToolText>
                        <ToolBtn $on style={{ marginLeft: 9 }}><Icon name="smartSel" /></ToolBtn>
                        {toolIcons.map((name) => (
                            <ToolBtn $w={27.5} key={name}><Icon name={name} /></ToolBtn>
                        ))}
                        <ToolSep $l={2} $r={8} />
                        <ToolText>
                            <Icon name="clipboard" /> Clipboard<Caret />
                        </ToolText>
                        <ToolText $l={14}>[ Empty ]</ToolText>
                        <ToolSep $l={8} $r={8} />
                        <ToolText>
                            <Icon name="extend" /> Extend<Caret />
                        </ToolText>
                        <ToolText $l={14}>
                            <Icon name="selectBy" /> Select By<Caret />
                        </ToolText>
                        <ToolText $l={14}>
                            <Icon name="convert" /> Convert<Caret />
                        </ToolText>
                        <Caret $c="#111" $m="12px 0 0 14px" />
                    </Toolbar>

                    <Viewport>
                        <Scene />
                        <ModelInfo>
                            <b>Model</b>
                            2/24/2023 12:42 PM
                        </ModelInfo>
                        <Brand>
                            <BrandName>Ansys</BrandName>
                            <BrandYear>2022 R2</BrandYear>
                            <BrandEdition>STUDENT</BrandEdition>
                        </Brand>
                        <ScaleBar>
                            <ScaleLabel $x={0}>0.00</ScaleLabel>
                            <ScaleLabel $x={199}>100.00</ScaleLabel>
                            <ScaleLabel $x={378} $start>200.00 (mm)</ScaleLabel>
                            <ScaleTrack>
                                <ScaleSeg $dark />
                                <ScaleSeg />
                                <ScaleSeg $dark />
                                <ScaleSeg />
                            </ScaleTrack>
                            <ScaleLabel $x={98} $low>50.00</ScaleLabel>
                            <ScaleLabel $x={300} $low>150.00</ScaleLabel>
                        </ScaleBar>
                    </Viewport>

                    <Messages>
                        <PaneHeader $h={25} $pl={5} $framed>
                            Messages
                            <Grip />
                            <Caret $c="#222" $m="0" />
                            <PaneBtn><Icon name="pin" size={14} /></PaneBtn>
                            <PaneBtn><Icon name="paneClose" size={13} /></PaneBtn>
                        </PaneHeader>
                        <MessageTable>
                            <colgroup>
                                <col width="61" />
                                <col width="583" />
                                <col width="380" />
                                <col width="275" />
                            </colgroup>
                            <thead>
                                <tr>
                                    <th />
                                    <th>Text</th>
                                    <th>Association</th>
                                    <th>Timestamp</th>
                                </tr>
                            </thead>
                            <tbody>
                                {messageRows.map((row, i) => (
                                    <tr key={i}>
                                        <td className="kind">{row[0]}</td>
                                        <td>{row[1]}</td>
                                        <td>{row[2]}</td>
                                        <td>{row[3]}</td>
                                    </tr>
                                ))}
                            </tbody>
                        </MessageTable>
                    </Messages>
                </RightPane>
            </Main>

            <StatusBar>
                Ready
                <StatusItem $ml={1238}>
                    <Icon name="info" />
                    4 Messages
                </StatusItem>
                <StatusItem $ml={22}>No Selection</StatusItem>
                <StatusItem $ml={26}>
                    <Caret as="span" $c="#fff" style={{ transform: "rotate(180deg)" }} $m="0 6px 0 0" />
                    Metric (mm, kg, N, s, mV, mA)
                </StatusItem>
                <StatusItem $ml={16}>Degrees</StatusItem>
                <StatusItem $ml={15}>rad/s</StatusItem>
                <StatusItem $ml={16}>Celsius</StatusItem>
            </StatusBar>
            <BottomStrip />
        </Window>
    );
}
